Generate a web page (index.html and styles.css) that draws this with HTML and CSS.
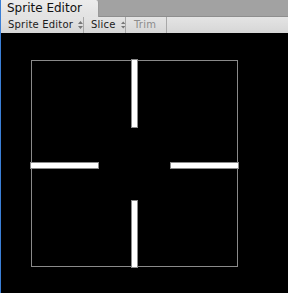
FILE: index.html
```html
<!doctype html>
<html lang="en">
<head>
	<meta charset="UTF-8">
	<title>Sprite Editor</title>
	<link rel="stylesheet" href="styles.css">
</head>
<body>
	<div class="window">
		<div class="tabstrip">
			<div class="tab">Sprite Editor</div>
		</div>
		<div class="toolbar">
			<div class="tool popup">Sprite Editor
				<svg class="arrows" width="5" height="8" viewBox="0 0 5 8"><path d="M2.5 0 L5 3 H0 Z M2.5 8 L5 5 H0 Z" /></svg>
			</div>
			<div class="tool popup">Slice
				<svg class="arrows" width="5" height="8" viewBox="0 0 5 8"><path d="M2.5 0 L5 3 H0 Z M2.5 8 L5 5 H0 Z" /></svg>
			</div>
			<div class="tool disabled">Trim</div>
		</div>
		<div class="canvas">
			<svg class="sprite" width="288" height="260" viewBox="0 33 288 260">
				<!-- sprite bounds -->
				<rect x="30.5" y="60.5" width="206" height="206" fill="none" stroke="#8a8a8a" />
				<!-- border handles -->
				<rect class="handle" x="130.5" y="59.5" width="6" height="68" />
				<rect class="handle" x="130.5" y="200.5" width="6" height="67" />
				<rect class="handle" x="29.5" y="162.5" width="68" height="6" />
				<rect class="handle" x="169.5" y="162.5" width="68" height="6" />
			</svg>
		</div>
	</div>
</body>
</html>
```

FILE: styles.css
```css
html, body {
	margin: 0;
	padding: 0;
	background: #000;
}

.window {
	width: 288px;
	height: 293px;
	display: flex;
	flex-direction: column;
	font-family: "DejaVu Sans", sans-serif;
	border-left: 1px solid #3b7fd6;
	box-sizing: border-box;
	overflow: hidden;
}

.tabstrip {
	height: 16px;
	background: #a2a2a2;
	display: flex;
	position: relative;
	z-index: 1;
}

/* tab overlaps the toolbar's top line so it looks attached */
.tab {
	width: 98px;
	height: 17px;
	box-sizing: border-box;
	padding: 1px 0 0 6px;
	background: linear-gradient(#ececec, #e2e2e2);
	border-top-right-radius: 3px;
	border-right: 1px solid #9a9a9a;
	font-size: 12px;
	line-height: 15px;
	color: #111;
}

.toolbar {
	height: 17px;
	display: flex;
	background: linear-gradient(#e4e4e4, #d6d6d6);
	border-top: 1px solid #8e8e8e;
	box-sizing: border-box;
}

.tool {
	display: flex;
	align-items: center;
	box-sizing: border-box;
	padding-left: 7px;
	font-size: 10px;
	letter-spacing: .2px;
	line-height: 16px;
	color: #1a1a1a;
	border-right: 1px solid #a8a8a8;
	white-space: nowrap;
}

.tool:nth-child(1) { width: 83px; }
.tool:nth-child(2) { width: 42px; }
.tool:nth-child(3) { width: 41px; }

.tool .arrows {
	fill: #777;
	margin-left: 5px;
}

.tool.disabled {
	color: #8c8c8c;
	padding-left: 8px;
}

.canvas {
	flex: 1;
	background: #000;
}

.sprite {
	display: block;
}

.handle {
	fill: #fff;
	stroke: #8a8a8a;
}
```
